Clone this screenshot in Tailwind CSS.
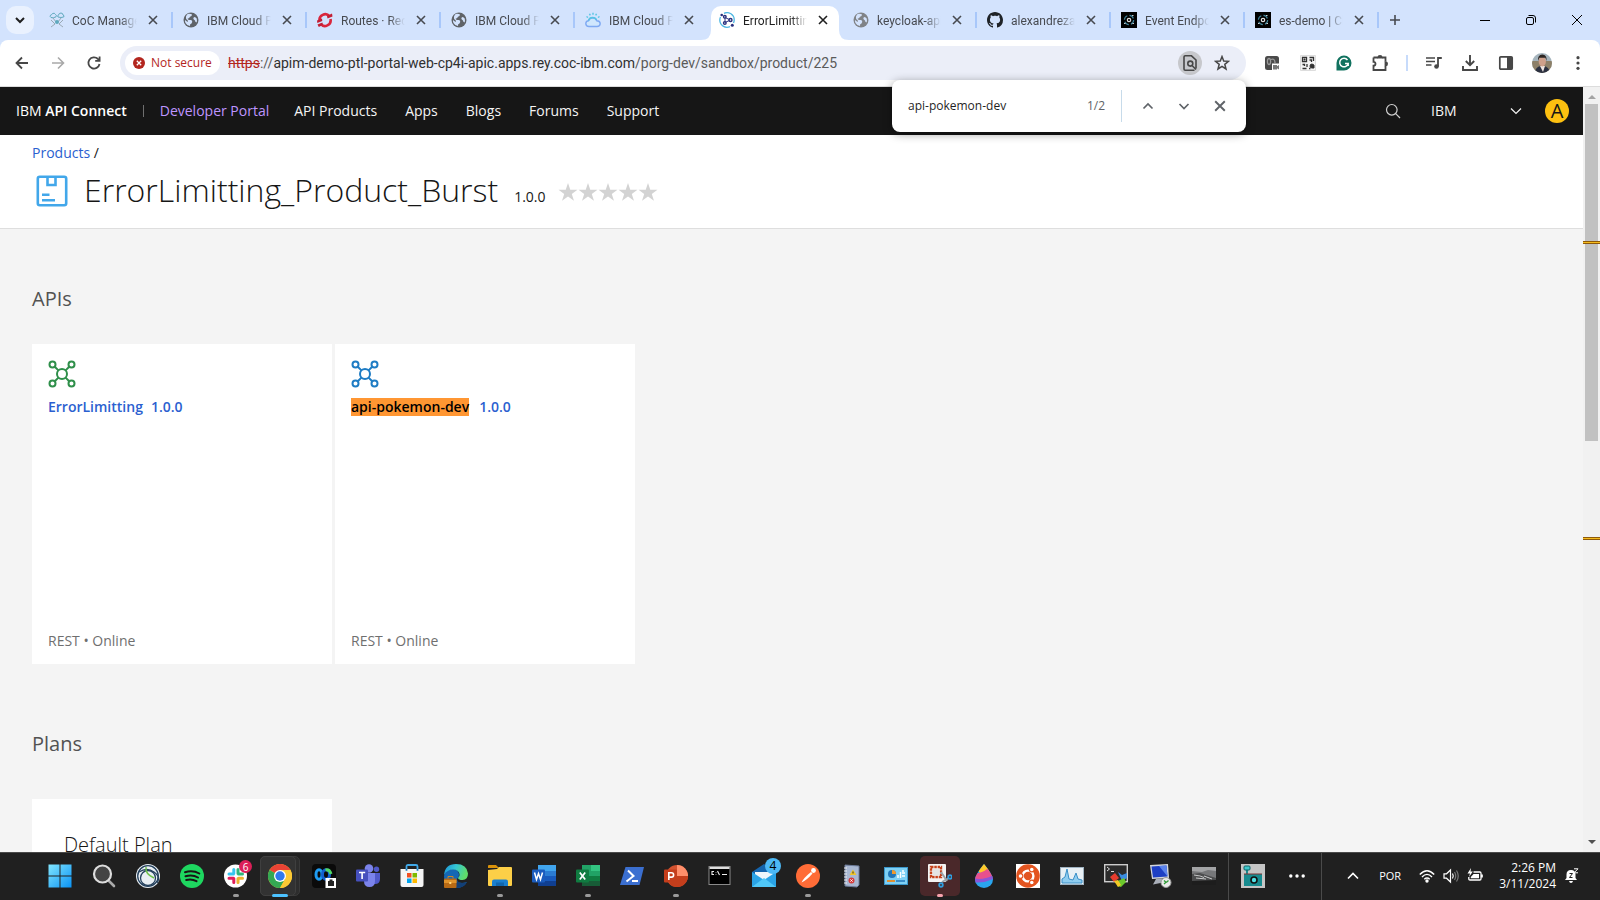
<!DOCTYPE html>
<html lang="en">
<head>
<meta charset="utf-8">
<title>ErrorLimitting_Product_Burst | IBM API Connect</title>
<script src="https://cdn.jsdelivr.net/npm/@tailwindcss/browser@4"></script>
</head>
<body class="flex h-screen flex-col overflow-hidden bg-white font-['Open_Sans','Noto_Sans',sans-serif] text-[#161616]">

<svg class="hidden" aria-hidden="true">
  <symbol id="x" viewBox="0 0 10 10"><path d="M1 1l8 8M9 1L1 9" stroke="currentColor" stroke-width="1.6" fill="none"/></symbol>
  <symbol id="globe" viewBox="0 0 16 16"><circle cx="8" cy="8" r="7.5" fill="currentColor"/><path d="M5 1.800Q8 1.500 9 2.500Q9 4.500 7 4.800Q6.500 6.500 4.600 6.800Q4.500 8 8 8Q9.500 8.300 9.200 10Q8.800 12 7.200 12.300L7 14Q4 13.700 2.500 11Q1.800 9.500 2 8Q3.500 9.500 5 9.800Q5.500 8.800 4 8Q2.500 6.500 3 4.500Q3.800 2.500 5 1.800ZM11 5Q13 5 13.700 6.500Q14.300 8.500 13.500 10.500Q12 10 12 8.500Q10.500 7.500 10.300 6.500Z" fill="#d3e3fd"/></symbol>
  <symbol id="event" viewBox="0 0 16 16"><rect width="16" height="16" fill="#000"/><circle cx="8" cy="8" r="4.600" fill="none" stroke="#3d7f95" stroke-width="1.200" stroke-dasharray="5 2.200"/><circle cx="8" cy="8" r="1.700" fill="none" stroke="#ddd" stroke-width="1.200"/><path d="M3 11.500h1.500M11.500 11.500H13M11 3.500h1.500" stroke="#ccc"/></symbol>
  <symbol id="net" viewBox="0 0 28 28"><g fill="none" stroke="currentColor" stroke-width="2"><circle cx="14" cy="14" r="5"/><circle cx="4.500" cy="4.500" r="3"/><circle cx="23.500" cy="4.500" r="3"/><circle cx="4.500" cy="23.500" r="3"/><circle cx="23.500" cy="23.500" r="3"/><path d="M6.800 6.800l3.600 3.600M21.200 6.800l-3.600 3.600M6.800 21.200l3.600-3.600M21.200 21.200l-3.600-3.600"/></g></symbol>
  <symbol id="star" viewBox="0 0 20 19"><path d="M10 0l2.400 7H20l-6 4.500 2.300 7.200L10 14.300l-6.300 4.400L6 11.500 0 7h7.600z" fill="#d3d3d3"/></symbol>
</svg>

<!-- Tab strip -->
<header class="flex h-10 shrink-0 bg-[#d3e3fd] text-[#474a50]">
  <button aria-label="Search tabs" class="ml-1.5 mt-1.5 mr-1 grid size-7 place-items-center rounded-[10px] bg-[#e9f1fe] text-[#1f1f1f]"><svg class="size-3" viewBox="0 0 12 12"><path d="M2 4l4 4 4-4" fill="none" stroke="currentColor" stroke-width="2"/></svg></button>
  <nav aria-label="Tabs" class="flex font-['Roboto','Open_Sans',sans-serif] text-xs">
    <div class="flex w-[134px] items-center pl-[11px]">
      <svg class="size-4 shrink-0" viewBox="0 0 16 16"><g fill="none" stroke="#5fa9bd"><path d="M2 5.500Q.5 4.500 1.500 3.200Q3 2.800 3.500 1.500Q5.500.5 6.500 2.500Q8 3 7 4.800Q4 6.500 2 5.500ZM9 5Q8 4 9.500 3Q10 1 12 1Q14 1.200 14 3Q15.700 3.500 14.700 5Q12 6 9 5Z"/><path d="M4 6l3 4M12 6L9 10M2 8l4 4-4 3M14 8l-4 4 4 3" stroke="#9aa9b5"/></g><circle cx="8" cy="10" r="2" fill="#5fa9bd"/></svg>
      <a href="#" class="ml-[7px] w-[65px] overflow-hidden pt-px whitespace-nowrap mask-r-from-75% mask-r-to-100%">CoC Management</a>
      <button aria-label="Close tab" class="ml-2 grid size-4 place-items-center"><svg class="size-2.5"><use href="#x"/></svg></button>
      <span class="-mr-px ml-auto h-4 w-0.5 bg-[#a8c7fa]"></span>
    </div>
    <div class="flex w-[134px] items-center pl-[11px]">
      <svg class="size-4 shrink-0 text-[#5f6368]"><use href="#globe"/></svg>
      <a href="#" class="ml-2 w-16 overflow-hidden pt-px whitespace-nowrap mask-r-from-75% mask-r-to-100%">IBM Cloud Pak</a>
      <button aria-label="Close tab" class="ml-2 grid size-4 place-items-center"><svg class="size-2.5"><use href="#x"/></svg></button>
      <span class="-mr-px ml-auto h-4 w-0.5 bg-[#a8c7fa]"></span>
    </div>
    <div class="flex w-[134px] items-center pl-[11px]">
      <svg class="size-4 shrink-0" viewBox="0 0 16 16"><path d="M2.600 9A5.700 5.700 0 0 1 12.500 4.200M13.500 7A5.700 5.700 0 0 1 3.500 11.800" fill="none" stroke="#d9263c" stroke-width="2.600"/><path d="M10 4l5-2.500.5 3-5 2zM0 8.500l5-2 .3 2.500-5 2zM.5 12.500l5-2 .3 2.500-4 2z" fill="#c21f35"/></svg>
      <a href="#" class="ml-2 w-16 overflow-hidden pt-px whitespace-nowrap mask-r-from-75% mask-r-to-100%">Routes · Red Hat</a>
      <button aria-label="Close tab" class="ml-2 grid size-4 place-items-center"><svg class="size-2.5"><use href="#x"/></svg></button>
      <span class="-mr-px ml-auto h-4 w-0.5 bg-[#a8c7fa]"></span>
    </div>
    <div class="flex w-[134px] items-center pl-[11px]">
      <svg class="size-4 shrink-0 text-[#5f6368]"><use href="#globe"/></svg>
      <a href="#" class="ml-2 w-16 overflow-hidden pt-px whitespace-nowrap mask-r-from-75% mask-r-to-100%">IBM Cloud Pak</a>
      <button aria-label="Close tab" class="ml-2 grid size-4 place-items-center"><svg class="size-2.5"><use href="#x"/></svg></button>
      <span class="-mr-px ml-auto h-4 w-0.5 bg-[#a8c7fa]"></span>
    </div>
    <div class="flex w-[134px] items-center pl-[11px]">
      <svg class="size-4 shrink-0" viewBox="0 0 16 16"><path d="M4 14.500Q.8 14.500.8 11.500Q1 9 3.500 8.800Q4.500 6 7.500 5.800Q11 6 11.800 8.800Q15.200 9 15.200 11.800Q15 14.500 12 14.500Z" fill="#cfe6fd" stroke="#7ea9f3" stroke-width="1.400"/><path d="M3.500 8.500Q4.500 5.500 7.500 5.500Q10.500 5.500 11.500 8" fill="none" stroke="#56c5e3" stroke-width="1.400"/><path d="M8 .8V2.800M4.500 1.800l.8 1.600M11.500 1.800l-.8 1.600M1.500 4.500l1.500 1M14.500 4.500l-1.500 1" stroke="#56c5e3" stroke-width="1.400"/></svg>
      <a href="#" class="ml-2 w-16 overflow-hidden pt-px whitespace-nowrap mask-r-from-75% mask-r-to-100%">IBM Cloud Pak</a>
      <button aria-label="Close tab" class="ml-2 grid size-4 place-items-center"><svg class="size-2.5"><use href="#x"/></svg></button>
    </div>
    <div class="relative w-[134px] px-[3px] pt-1.5 text-[#1f1f1f]">
      <div class="flex h-full items-center rounded-t-[10px] bg-white pb-1.5 pl-2">
        <svg class="size-4 shrink-0" viewBox="0 0 16 16"><path d="M5 1.300A7.200 7.200 0 0 1 15.200 8Q15.200 9.500 14.500 11M11 14.600A7.200 7.200 0 0 1 .8 8Q.8 6.500 1.500 5" fill="none" stroke="#4db6e2" stroke-width="1.300"/><path d="M6 5.200v5.600M6.200 5.500l5 2.500M6.200 10.500l5-2.500" fill="none" stroke="#29307e" stroke-width="1"/><g fill="#fff" stroke="#29307e" stroke-width="1.400"><circle cx="5.800" cy="4.800" r="1.300"/><circle cx="5.800" cy="11" r="1.300"/><circle cx="11.500" cy="8" r="1.500"/></g><g fill="#29307e"><circle cx="2.700" cy="3" r="1.300"/><circle cx="13.300" cy="13.300" r="1.500"/></g></svg>
        <a href="#" aria-current="page" class="ml-2 w-16 overflow-hidden pt-px whitespace-nowrap mask-r-from-75% mask-r-to-100%">ErrorLimitting_Product</a>
        <button aria-label="Close tab" class="ml-2 grid size-4 place-items-center"><svg class="size-2.5"><use href="#x"/></svg></button>
      </div>
      <svg class="absolute bottom-0 -left-[7px] size-2.5" viewBox="0 0 10 10"><path d="M10 0v10H0Q10 10 10 0z" fill="#fff"/></svg>
      <svg class="absolute bottom-0 -right-[7px] size-2.5" viewBox="0 0 10 10"><path d="M0 0v10h10Q0 10 0 0z" fill="#fff"/></svg>
    </div>
    <div class="flex w-[134px] items-center pl-[11px]">
      <svg class="size-4 shrink-0 text-[#808387]"><use href="#globe"/></svg>
      <a href="#" class="ml-2 w-16 overflow-hidden pt-px whitespace-nowrap mask-r-from-75% mask-r-to-100%">keycloak-apic</a>
      <button aria-label="Close tab" class="ml-2 grid size-4 place-items-center"><svg class="size-2.5"><use href="#x"/></svg></button>
      <span class="-mr-px ml-auto h-4 w-0.5 bg-[#a8c7fa]"></span>
    </div>
    <div class="flex w-[134px] items-center pl-[11px]">
      <svg class="size-4 shrink-0 text-[#1f2328]" viewBox="0 0 16 16"><path fill="currentColor" d="M8 0C3.580 0 0 3.580 0 8c0 3.540 2.290 6.530 5.470 7.590.4.070.55-.17.55-.38 0-.19-.01-.82-.01-1.490-2.010.37-2.530-.49-2.690-.94-.09-.23-.48-.94-.82-1.130-.28-.15-.68-.52-.01-.53.63-.01 1.080.58 1.230.82.72 1.210 1.870.87 2.330.66.070-.52.28-.87.51-1.070-1.780-.2-3.640-.89-3.640-3.950 0-.87.31-1.590.82-2.150-.08-.2-.36-1.020.08-2.120 0 0 .67-.21 2.200.82.64-.18 1.320-.27 2-.27s1.360.09 2 .27c1.530-1.040 2.200-.82 2.200-.82.44 1.100.16 1.920.08 2.120.51.560.82 1.270.82 2.150 0 3.070-1.870 3.750-3.650 3.950.29.250.54.730.54 1.480 0 1.070-.01 1.930-.01 2.200 0 .21.15.46.55.38A8.010 8.010 0 0 0 16 8c0-4.420-3.580-8-8-8z"/></svg>
      <a href="#" class="ml-2 w-16 overflow-hidden pt-px whitespace-nowrap mask-r-from-75% mask-r-to-100%">alexandrezanetti</a>
      <button aria-label="Close tab" class="ml-2 grid size-4 place-items-center"><svg class="size-2.5"><use href="#x"/></svg></button>
      <span class="-mr-px ml-auto h-4 w-0.5 bg-[#a8c7fa]"></span>
    </div>
    <div class="flex w-[134px] items-center pl-[11px]">
      <svg class="size-4 shrink-0"><use href="#event"/></svg>
      <a href="#" class="ml-2 w-16 overflow-hidden pt-px whitespace-nowrap mask-r-from-75% mask-r-to-100%">Event Endpoint</a>
      <button aria-label="Close tab" class="ml-2 grid size-4 place-items-center"><svg class="size-2.5"><use href="#x"/></svg></button>
      <span class="-mr-px ml-auto h-4 w-0.5 bg-[#a8c7fa]"></span>
    </div>
    <div class="flex w-[134px] items-center pl-[11px]">
      <svg class="size-4 shrink-0"><use href="#event"/></svg>
      <a href="#" class="ml-2 w-16 overflow-hidden pt-px whitespace-nowrap mask-r-from-75% mask-r-to-100%">es-demo | Cloud</a>
      <button aria-label="Close tab" class="ml-2 grid size-4 place-items-center"><svg class="size-2.5"><use href="#x"/></svg></button>
      <span class="-mr-px ml-auto h-4 w-0.5 bg-[#a8c7fa]"></span>
    </div>
  </nav>
  <button aria-label="New tab" class="grid w-[34px] place-items-center"><svg class="size-3" viewBox="0 0 12 12"><path d="M6 1v10M1 6h10" stroke="currentColor" stroke-width="1.600"/></svg></button>
  <div class="ml-auto flex text-black">
    <button aria-label="Minimize" class="grid w-[46px] place-items-center"><svg class="size-3" viewBox="0 0 12 12"><path d="M1 6.500h10" stroke="currentColor"/></svg></button>
    <button aria-label="Restore" class="grid w-[46px] place-items-center"><svg class="size-3" viewBox="0 0 12 12" fill="none" stroke="currentColor"><rect x="1.500" y="3.500" width="7" height="7" rx="1.500"/><path d="M3.500 1.500H8Q10.500 1.500 10.500 4V8.500"/></svg></button>
    <button aria-label="Close" class="grid w-[46px] place-items-center"><svg class="size-3" viewBox="0 0 12 12"><path d="M1 1l10 10M11 1L1 11" stroke="currentColor"/></svg></button>
  </div>
</header>

<!-- Toolbar -->
<div class="bg-[#d3e3fd]">
<div class="relative flex h-[47px] shrink-0 items-center rounded-t-lg border-b border-[#dcdcdc] bg-white px-1 text-[#474747]">
  <button aria-label="Back" class="grid size-9 place-items-center"><svg class="size-4" viewBox="0 0 16 16" fill="none" stroke="currentColor" stroke-width="1.800"><path d="M14 8H3M8 2.500L2.500 8 8 13.500"/></svg></button>
  <button aria-label="Forward" class="grid size-9 place-items-center text-[#a9a9a9]"><svg class="size-4" viewBox="0 0 16 16" fill="none" stroke="currentColor" stroke-width="1.600"><path d="M2 8h11M8 2.500L13.500 8 8 13.500"/></svg></button>
  <button aria-label="Reload" class="grid size-9 place-items-center"><svg class="size-4" viewBox="0 0 16 16" fill="none" stroke="currentColor" stroke-width="1.800"><path d="M13.500 9A5.600 5.600 0 1 1 12 4l1.500 1.700"/><path d="M13.600 1.500v4.400H9.200"/></svg></button>
  <div class="ml-2 flex h-[34px] flex-1 items-center rounded-full bg-[#ebeef8] pl-[5px] pr-2">
    <button class="flex h-6 w-[95px] items-center gap-1.5 rounded-full bg-white pl-2 text-xs whitespace-nowrap text-[#b3261e]"><svg class="size-3" viewBox="0 0 12 12"><circle cx="6" cy="6" r="6" fill="#b3261e"/><path d="M3.800 3.800l4.400 4.400M8.200 3.800L3.800 8.200" stroke="#fff" stroke-width="1.300"/></svg>Not secure</button>
    <div class="ml-2 flex-1 font-['Roboto','Open_Sans',sans-serif] text-sm whitespace-nowrap text-[#5a5a5a]"><span class="text-[#b3261e] line-through">https</span>://<span class="text-[#303030]">apim-demo-ptl-portal-web-cp4i-apic.apps.rey.coc-ibm.com</span>/porg-dev/sandbox/product/225</div>
    <button aria-label="Find in page" class="grid size-6 place-items-center rounded-full bg-[#c7c8cc]"><svg class="size-4" viewBox="0 0 16 16" fill="none" stroke="currentColor" stroke-width="1.600"><path d="M12.500 15.200H3.200Q2 15.200 2 14V2Q2 .8 3.200.8h6.300L14 5v8.500"/><circle cx="8.300" cy="8.600" r="2.500"/><path d="M10 10.500l4 4"/></svg></button>
    <button aria-label="Bookmark this page" class="ml-1 grid size-8 place-items-center"><svg class="size-4" viewBox="0 0 16 16"><path d="M8 1.600l1.700 4.400 4.800.3-3.700 3 1.200 4.700-4-2.600L4 14l1.200-4.700-3.700-3L6.300 6z" fill="none" stroke="currentColor" stroke-width="1.500"/></svg></button>
  </div>
  <div class="ml-2 flex items-center">
    <button aria-label="Recorder extension" class="grid size-9 place-items-center"><svg class="size-4" viewBox="0 0 16 16"><rect x="1" y="1" width="14" height="14" rx="2.500" fill="#4a4a4a"/><ellipse cx="5" cy="6.500" rx="1.600" ry="3" fill="none" stroke="#9a9a9a" stroke-width="1.300"/><path d="M7 4.500q4-1.500 4 3.500" fill="none" stroke="#9a9a9a" stroke-width="1.300"/><path d="M8 8.500h8V16H8z" fill="#fff"/><path d="M9 10h4v1.200l2-1.200v4.500l-2-1.200v1.200H9z" fill="#777"/></svg></button>
    <button aria-label="QR code" class="grid size-9 place-items-center"><svg class="size-4" viewBox="0 0 16 16"><path fill="#f5f5f5" stroke="#ddd" d="M.5.500h15v15H.5z"/><path d="M2.500 2.500h4v4h-4zM9.500 2.500h4v3.500M9.500 5h2v2M2.500 9.500h2v1.500M7 9v3M2.500 13.500h4M9 13.500h1.500" fill="none" stroke="#333" stroke-width="1.300"/><path d="M4 4h1v1H4zM10 11q0-2 2-2l2 1v3h-2q-2 0-2-2z" fill="#333" stroke="#333"/></svg></button>
    <button aria-label="Grammarly" class="grid size-9 place-items-center"><svg class="size-4" viewBox="0 0 16 16"><path d="M8 .5A7.500 7.500 0 1 1 8 15.500H.5V8A7.500 7.500 0 0 1 8 .5z" fill="#11725f"/><path d="M11.500 5A4.300 4.300 0 1 0 12.200 8.500H9M12.200 8.200V11" fill="none" stroke="#fff" stroke-width="1.500"/></svg></button>
    <button aria-label="Extensions" class="grid size-9 place-items-center"><svg class="size-[18px]" viewBox="0 0 18 18"><path d="M2.500 3.500h4.500M11 3.500h3.500v4M14.500 12v4h-12v-4.300q2 0 2-1.900t-2-1.900V3.500" fill="none" stroke="currentColor" stroke-width="1.800"/><path d="M6.500 4.400V3.200a2.500 2.200 0 0 1 5 0v1.200zM13.600 7.200h1.200a2.200 2.500 0 0 1 0 5h-1.200z" fill="currentColor"/></svg></button>
    <span class="mx-2 h-4 w-0.5 bg-[#c7dbfb]"></span>
    <button aria-label="Media controls" class="grid size-9 place-items-center"><svg class="size-4" viewBox="0 0 16 16"><path d="M0 3h9M0 6.500h9M0 10h5.500" stroke="currentColor" stroke-width="1.600"/><path d="M12 11.500V3h3.800" fill="none" stroke="currentColor" stroke-width="1.800"/><circle cx="10.500" cy="11.500" r="2.300" fill="currentColor"/></svg></button>
    <button aria-label="Downloads" class="grid size-9 place-items-center"><svg class="size-4" viewBox="0 0 16 16" fill="none" stroke="currentColor" stroke-width="1.900"><path d="M8 0v10M3.800 6L8 10.200 12.200 6M1 11v4h14v-4"/></svg></button>
    <button aria-label="Side panel" class="grid size-9 place-items-center"><svg class="size-4" viewBox="0 0 16 16"><rect x="1.800" y="1.800" width="12.400" height="12.400" rx="1" fill="none" stroke="currentColor" stroke-width="1.700"/><path d="M9 2h5v12H9z" fill="currentColor"/></svg></button>
    <button aria-label="Profile" class="grid size-9 place-items-center"><svg class="size-5 rounded-full" viewBox="0 0 20 20"><path fill="#a5b4bd" d="M0 0h20v20H0z"/><path fill="#8d8068" d="M0 8h20v12H0z"/><path d="M2.500 20q1-6 6-7h3q6 1 6.500 7z" fill="#2b3040"/><path d="M8 13h5l-2 6z" fill="#efe5df"/><ellipse cx="10.300" cy="8.500" rx="3.600" ry="5" fill="#cfa08a"/><path d="M6 8q-.5-6.500 4.300-6.500t4.300 6.500l-1.200-3.200h-6z" fill="#2d2522"/></svg></button>
    <button aria-label="Menu" class="grid size-9 place-items-center"><svg class="size-4" viewBox="0 0 16 16" fill="currentColor"><circle cx="8" cy="2.700" r="1.600"/><circle cx="8" cy="8" r="1.600"/><circle cx="8" cy="13.300" r="1.600"/></svg></button>
  </div>

  <!-- Find bar -->
  <div role="search" class="absolute top-10 right-[354px] z-10 flex h-[52px] w-[354px] items-center rounded-lg bg-white pr-2 pl-4 text-xs text-[#1f1f1f] shadow-[0_2px_10px_rgba(0,0,0,.4)]">
    <input aria-label="Find in page" value="api-pokemon-dev" class="min-w-0 flex-1 outline-none">
    <span class="text-[#5f6368]">1/2</span>
    <span class="ml-4 mr-2 h-8 w-px bg-[#c7dbea]"></span>
    <button aria-label="Previous match" class="grid size-9 place-items-center text-[#5f6368]"><svg class="size-3" viewBox="0 0 12 12"><path d="M1.500 8.500L6 4l4.500 4.500" fill="none" stroke="currentColor" stroke-width="1.700"/></svg></button>
    <button aria-label="Next match" class="grid size-9 place-items-center text-[#5f6368]"><svg class="size-3" viewBox="0 0 12 12"><path d="M1.500 4L6 8.500 10.500 4" fill="none" stroke="currentColor" stroke-width="1.700"/></svg></button>
    <button aria-label="Close find bar" class="grid size-9 place-items-center text-[#5f6368]"><svg class="size-3"><use href="#x"/></svg></button>
  </div>
</div>
</div>

<!-- Page -->
<div class="flex min-h-0 flex-1">
  <div class="min-w-0 flex-1 overflow-hidden bg-[#f4f4f4]">
    <nav aria-label="Portal" class="flex h-12 items-center bg-[#161616] pr-3.5 pl-4 text-sm text-[#f4f4f4]">
      <a href="#" class="text-white">IBM <span class="font-semibold">API Connect</span></a>
      <span class="mx-4 h-3 w-px bg-[#6f6f6f]"></span>
      <a href="#" class="text-[#be95ff]">Developer Portal</a>
      <div class="ml-[25px] flex gap-7"><a href="#">API Products</a><a href="#">Apps</a><a href="#">Blogs</a><a href="#">Forums</a><a href="#">Support</a></div>
      <button aria-label="Search" class="ml-auto"><svg class="size-4" viewBox="0 0 16 16" fill="none" stroke="#d0d0d0" stroke-width="1.200"><circle cx="6.800" cy="6.800" r="5.300"/><path d="M10.700 10.700L15 15"/></svg></button>
      <button class="ml-[30px] flex w-[91px] items-center justify-between">IBM<svg class="size-3" viewBox="0 0 12 12"><path d="M1 3.500l5 5 5-5" fill="none" stroke="currentColor" stroke-width="1.200"/></svg></button>
      <button aria-label="Account" class="ml-[23px] grid size-6 place-items-center rounded-full bg-[#fdc010] text-xl leading-6 text-[#161616]">A</button>
    </nav>
    <div class="h-[94px] border-b border-[#dedede] bg-white px-8 pt-2">
      <div class="text-sm leading-5"><a href="#" class="text-[#2b5fd0]">Products</a> /</div>
      <div class="mt-2.5 flex h-9 items-center">
        <svg class="ml-1 size-8" viewBox="0 0 32 32" fill="none" stroke="#42a7ea" stroke-width="2.600"><rect x="1.800" y="1.800" width="28.400" height="28.400" rx="2"/><path d="M11.500 2v8h8V2M6 19.800h7.500M6 25.200h13"/></svg>
        <h1 class="ml-4 pb-0.5 text-[32px] font-light leading-9">ErrorLimitting_Product_Burst</h1>
        <span class="ml-4 self-end text-sm leading-6">1.0.0</span>
        <div role="img" aria-label="No rating" class="ml-3 flex pt-0.5"><svg class="h-[18px] w-5"><use href="#star"/></svg><svg class="h-[18px] w-5"><use href="#star"/></svg><svg class="h-[18px] w-5"><use href="#star"/></svg><svg class="h-[18px] w-5"><use href="#star"/></svg><svg class="h-[18px] w-5"><use href="#star"/></svg></div>
      </div>
    </div>
    <main class="px-8 pt-14">
      <h2 class="text-xl leading-7 text-[#525252]">APIs</h2>
      <div class="mt-[31px] flex gap-[3px]">
        <article class="flex h-80 w-[300px] flex-col bg-white p-4">
          <svg class="size-7 text-[#2f8f4a]"><use href="#net"/></svg>
          <h3 class="mt-2.5 flex gap-2 text-sm font-semibold leading-[18px]"><a href="#" class="text-[#2b5fd0]">ErrorLimitting</a><a href="#" class="text-[#2b5fd0]">1.0.0</a></h3>
          <p class="mt-auto text-sm leading-[14px] text-[#6f6f6f]">REST • Online</p>
        </article>
        <article class="flex h-80 w-[300px] flex-col bg-white p-4">
          <svg class="size-7 text-[#1e7cc4]"><use href="#net"/></svg>
          <h3 class="mt-2.5 flex gap-2.5 text-sm font-semibold leading-[18px]"><a href="#" class="bg-[#ff9632] text-black">api-pokemon-dev</a><a href="#" class="text-[#2b5fd0]">1.0.0</a></h3>
          <p class="mt-auto text-sm leading-[14px] text-[#6f6f6f]">REST • Online</p>
        </article>
      </div>
      <h2 class="mt-[66px] text-xl leading-7 text-[#525252]">Plans</h2>
      <section class="mt-[41px] w-[300px] bg-white p-8"><h3 class="text-xl font-light leading-7">Default Plan</h3></section>
    </main>
  </div>
  <div class="relative flex w-[17px] flex-col items-center justify-between bg-[#f1f1f1] py-1.5" aria-hidden="true">
    <svg class="size-2" viewBox="0 0 8 8"><path d="M0 6l4-4 4 4z" fill="#a3a3a3"/></svg>
    <svg class="size-2" viewBox="0 0 8 8"><path d="M0 2l4 4 4-4z" fill="#505050"/></svg>
    <span class="absolute inset-x-0.5 top-[17px] h-[44%] bg-[#c1c1c1]"></span>
    <span class="absolute inset-x-0 top-[154px] h-[3px] border-y border-[#8f5a08] bg-[#f5bc1e]"></span>
    <span class="absolute inset-x-0 top-[450px] h-[3px] border-y border-[#8f5a08] bg-[#f5bc1e]"></span>
  </div>
</div>

<!-- Taskbar -->
<footer class="flex h-12 shrink-0 items-stretch border-t border-[#4a4a4a] bg-[#202020] pb-px pl-[38px] text-xs text-white">
  <button aria-label="Start" class="grid w-11 place-items-center"><svg class="size-6" viewBox="0 0 24 24"><defs><linearGradient id="win" x2="1" y2="1"><stop stop-color="#82e6ff"/><stop offset="1" stop-color="#0a93f5"/></linearGradient></defs><path d="M.5.5h11v11H.5zM12.500.5h11v11h-11zM.5 12.500h11v11H.5zM12.500 12.500h11v11h-11z" fill="url(#win)"/></svg></button>
  <button aria-label="Search" class="grid w-11 place-items-center"><svg class="size-6" viewBox="0 0 24 24"><path d="M16 16l6 6" stroke="#aaa" stroke-width="2.600" stroke-linecap="round"/><circle cx="10.500" cy="10" r="8.500" fill="#444" stroke="#ddd" stroke-width="2.200"/></svg></button>
  <button aria-label="Cisco Secure Client" class="grid w-11 place-items-center"><svg class="size-6" viewBox="0 0 24 24"><circle cx="12" cy="12" r="12" fill="#e8eef3"/><g fill="none" stroke="#24405c" stroke-width="1.300"><circle cx="12" cy="12" r="10.300"/><circle cx="12" cy="14" r="7.500"/><path d="M3 8q8-5 15 0t3 11"/></g><path d="M10 3q-1 7 8 11" fill="none" stroke="#6cc04a" stroke-width="1.400"/></svg></button>
  <button aria-label="Spotify" class="grid w-11 place-items-center"><svg class="size-6" viewBox="0 0 24 24"><circle cx="12" cy="12" r="12" fill="#1ed760"/><path d="M5 8.200q8-2.200 14.300 1.300M5.500 12.300q7-2 12.500 1.200M6.200 16q5.500-1.500 10.300 1.200" fill="none" stroke="#191414" stroke-width="2" stroke-linecap="round"/></svg></button>
  <button aria-label="Slack" class="relative grid w-11 place-items-center"><svg class="size-6" viewBox="0 0 24 24"><circle cx="11.500" cy="12" r="11.500" fill="#fff"/><g stroke-width="3" stroke-linecap="round"><path d="M9.800 5.500v4M5 10h4.500" stroke="#36c5f0"/><path d="M14 5.500v4M14.500 10h4" stroke="#2eb67d"/><path d="M14 14.500v4M14.500 14.200h4" stroke="#ecb22e"/><path d="M9.800 14.500v4M5 14.200h4.500" stroke="#e01e5a"/></g></svg><span class="absolute top-[7px] right-1.5 grid size-[13px] place-items-center rounded-full bg-[#dc1f58] text-[10px] leading-none">6</span><span class="absolute bottom-0.5 h-[3px] w-1.5 rounded-full bg-[#9a9a9a]"></span></button>
  <button aria-label="Google Chrome" class="relative grid w-11 place-items-center"><span class="absolute inset-y-[3px] left-0.5 w-10 rounded-[5px] border border-[#3a3a3a] bg-[#2d2d2d]"></span><span class="absolute inset-y-[3px] left-0.5 w-9 rounded-[5px] border border-[#3f3f3f] bg-[#323232]"></span><svg class="relative size-6" viewBox="0 0 24 24"><circle cx="12" cy="12" r="12" fill="#fcc934"/><path d="M12 12L1.600 6A12 12 0 0 1 22.400 6z" fill="#ea4335"/><path d="M1.600 6A12 12 0 0 0 12 24l5.200-9L12 12z" fill="#34a853"/><path d="M12 6h10.400A12 12 0 0 1 12 24l5-9z" fill="#fcc934"/><circle cx="12" cy="12" r="6" fill="#fff"/><circle cx="12" cy="12" r="4.700" fill="#3079ed"/></svg><span class="absolute bottom-0.5 h-[3px] w-4 rounded-full bg-[#4cc2ff]"></span></button>
  <button aria-label="Webex" class="grid w-11 place-items-center"><svg class="size-6" viewBox="0 0 24 24"><rect width="24" height="24" rx="4" fill="#0a0a0a"/><g fill="none" stroke-width="3"><ellipse cx="7" cy="10.500" rx="3" ry="4.800" stroke="#1f9bf0"/><ellipse cx="14" cy="10.500" rx="3.500" ry="4.800" stroke="#1260d0"/><path d="M13.500 6q4-1 5.500 4" stroke="#4fd866"/></g><rect x="13.500" y="14" width="10.500" height="10" fill="#fff"/><path d="M16 17h6v5h-6zM17.500 15.500h3V17h-3z" fill="#222"/></svg></button>
  <button aria-label="Microsoft Teams" class="grid w-11 place-items-center"><svg class="size-6" viewBox="0 0 24 24"><circle cx="13" cy="4.500" r="4.300" fill="#7b83eb"/><circle cx="20.500" cy="5.200" r="2.700" fill="#5059c9"/><path d="M15 9h9v6q0 5-5 5h-4z" fill="#5059c9"/><path d="M8 9h11v8q0 6-5.500 6T8 17z" fill="#7b83eb"/><rect y="5.500" width="12" height="12" rx="1" fill="#4650bd"/><path d="M3 8.500h6.200M6.100 8.500v6.500" stroke="#fff" stroke-width="1.600"/></svg></button>
  <button aria-label="Microsoft Store" class="grid w-11 place-items-center"><svg class="size-6" viewBox="0 0 24 24"><path d="M6.500 6V2.500Q6.500 1 8 1h8Q17.500 1 17.500 2.500V6" fill="none" stroke="#41a9e8" stroke-width="1.800"/><path d="M.5 5h23v16q0 2-2 2h-19q-2 0-2-2z" fill="#f5f5f5"/><path d="M7 9h4.500v4.500H7z" fill="#f25022"/><path d="M12.500 9H17v4.500h-4.500z" fill="#7fba00"/><path d="M7 14.500h4.500V19H7z" fill="#00a4ef"/><path d="M12.500 14.500H17V19h-4.500z" fill="#ffb900"/><path d="M6.500 5v1.800M17.500 5v1.800" stroke="#1c78b8" stroke-width="1.800"/></svg></button>
  <button aria-label="Microsoft Edge" class="grid w-11 place-items-center"><svg class="size-6" viewBox="0 0 24 24"><defs><linearGradient id="edge" x2="1" y2="0.300"><stop stop-color="#1b8fd8"/><stop offset=".5" stop-color="#34c6d4"/><stop offset="1" stop-color="#5fdc6a"/></linearGradient></defs><path d="M0 12Q1 5 8 5q6 0 7 5 .5 3-2 5 0 6 10 3-4 6-11 6Q0 24 0 12z" fill="#1567b4"/><path d="M0 11Q1 0 12 0q11 0 12 9.500Q24 15.500 18.500 16q-4 0-4.500-2 2-1.500 1.500-4Q14.500 5.500 9 5.500 3 5.500 0 11z" fill="url(#edge)"/><path d="M12 16q4 4.500 11 2-2.500 6-11 6z" fill="#123f76"/><rect y="14.500" width="12.500" height="9.500" rx="1" fill="#b86a15"/><path d="M0 16h12.500v3H0z" fill="#e0932b"/><path d="M5.300 18h2v2h-2z" fill="#ffd77a"/><path d="M4 14.500v-2h5v2" fill="none" stroke="#d28620"/></svg></button>
  <button aria-label="File Explorer" class="relative grid w-11 place-items-center"><svg class="size-6" viewBox="0 0 24 24"><path d="M0 2q0-1 1-1h7l3 3h-11z" fill="#d9920a"/><path d="M0 6l9-1 2-2h12q1 0 1 1v17q0 1-1 1H1q-1 0-1-1z" fill="#fdcf47"/><path d="M4 22v-4.500q0-2 2-2h12q2 0 2 2V22z" fill="#1a7fce"/><path d="M8 18.500h8V22H8z" fill="#1166ad"/></svg><span class="absolute bottom-0.5 h-[3px] w-1.5 rounded-full bg-[#9a9a9a]"></span></button>
  <button aria-label="Word" class="grid w-11 place-items-center"><svg class="size-6" viewBox="0 0 24 24"><path d="M6 1h18v6H6z" fill="#41a5ee"/><path d="M6 7h18v5H6z" fill="#2b7cd3"/><path d="M6 12h18v5H6z" fill="#185abd"/><path d="M6 17h18v5H6z" fill="#103f91"/><rect y="5.500" width="13" height="13" rx="1" fill="#1b5cbe"/><path d="M2.500 8.500l2 7 2-6 2 6 2-7" fill="none" stroke="#fff" stroke-width="1.500"/></svg></button>
  <button aria-label="Excel" class="relative grid w-11 place-items-center"><svg class="size-6" viewBox="0 0 24 24"><path d="M6 1h9v21H6z" fill="#21a366"/><path d="M15 1h9v6h-9z" fill="#33c481"/><path d="M15 7h9v5h-9z" fill="#21a366"/><path d="M6 12h18v5H6z" fill="#107c41"/><path d="M6 17h18v5H6z" fill="#185c37"/><rect y="5.500" width="13" height="13" rx="1" fill="#107c41"/><path d="M3.800 8.500l5.400 7M9.200 8.500l-5.400 7" stroke="#fff" stroke-width="1.700"/></svg><span class="absolute bottom-0.5 h-[3px] w-1.5 rounded-full bg-[#9a9a9a]"></span></button>
  <button aria-label="PowerShell" class="grid w-11 place-items-center"><svg class="size-6" viewBox="0 0 24 24"><path d="M5.500 3H24l-4.500 18H0z" fill="#3b6fd0"/><path d="M8 6.500l5.500 5.500-7 5.500M12 17h6" fill="none" stroke="#fff" stroke-width="2"/></svg></button>
  <button aria-label="PowerPoint" class="relative grid w-11 place-items-center"><svg class="size-6" viewBox="0 0 24 24"><circle cx="13" cy="12" r="11" fill="#d35230"/><path d="M13 1a11 11 0 0 1 11 11H13z" fill="#ff8f6b"/><path d="M5 19.500A11 11 0 0 0 24 12H13z" fill="#c43e1c"/><rect y="5.500" width="13" height="13" rx="1" fill="#c43e1c"/><path d="M4.800 16V8.700h2.600q2.200 0 2.200 2.200t-2.200 2.200H4.800" fill="none" stroke="#fff" stroke-width="1.600"/></svg><span class="absolute bottom-0.5 h-[3px] w-1.5 rounded-full bg-[#9a9a9a]"></span></button>
  <button aria-label="Command Prompt" class="grid w-11 place-items-center"><svg class="size-6" viewBox="0 0 24 24"><rect x="1" y="2.500" width="21" height="18" fill="#000" stroke="#8a8a8a"/><path d="M1.500 3h20v2h-20z" fill="#ddd"/><path d="M6 7.500H4v3h2M8 8v.5M8 10v.5M9.500 7l2 4M14 10.500h5" fill="none" stroke="#eee" stroke-width="1.100"/></svg></button>
  <button aria-label="Mail" class="relative grid w-11 place-items-center"><svg class="size-6" viewBox="0 0 24 24"><path d="M0 8L12 0l12 8v6H0z" fill="#1464ad"/><path d="M3 8h18v8H3z" fill="#eef6fb"/><path d="M0 8l12 8L24 8v15H0z" fill="#2aa3e6"/><path d="M0 23L12 14l12 9z" fill="#50c8f8"/></svg><span class="absolute top-[5px] right-[5px] grid size-4 place-items-center rounded-full bg-[#4cb8f5] text-xs leading-none text-black">4</span></button>
  <button aria-label="Postman" class="relative grid w-11 place-items-center"><svg class="size-6" viewBox="0 0 24 24"><circle cx="12" cy="12" r="12" fill="#ff6c37"/><path d="M5.500 18.500q2-4.500 9.500-10.500l1.500 1.500Q11 16 5.500 18.500z" fill="#fff"/><circle cx="17.500" cy="6.500" r="2.400" fill="#fff"/></svg><span class="absolute bottom-0.5 h-[3px] w-1.5 rounded-full bg-[#9a9a9a]"></span></button>
  <button aria-label="Event Viewer" class="grid w-11 place-items-center"><svg class="size-6" viewBox="0 0 24 24"><path d="M5 1l14 1v19l-2 2-12-1z" fill="#a9b8d2" stroke="#6c7b99"/><path d="M7 3h9v17H7z" fill="#a9b8d2"/><path d="M4 4h3M4 7h3M4 10h3M4 13h3M4 16h3M4 19h3" stroke="#eee"/><path d="M13 5.500l3.500 5.500h-7z" fill="#f0c52a"/><path d="M13 7.500v2" stroke="#333"/><circle cx="11.500" cy="16.500" r="3" fill="#d63c3c"/><path d="M10.400 15.400l2.200 2.200M12.600 15.400l-2.200 2.200" stroke="#fff"/></svg></button>
  <button aria-label="Control Panel" class="grid w-11 place-items-center"><svg class="size-6" viewBox="0 0 24 24"><rect x=".5" y="3.500" width="23" height="17" fill="#7ed0f4" stroke="#3a98cc"/><circle cx="8" cy="10" r="4" fill="#2276b8"/><path d="M8 10V6a4 4 0 0 1 4 4z" fill="#f29a2e"/><path d="M14 11v3M16.500 8v6M19 6v2M18 9h3M18 12h3" stroke="#fff" stroke-width="1.500"/><path d="M3 17h8" stroke="#e8891d" stroke-width="1.800"/><path d="M12 17h9" stroke="#2276b8" stroke-width="1.500"/></svg></button>
  <button aria-label="Snipping Tool" class="relative grid w-11 place-items-center"><span class="absolute inset-y-[3px] left-0.5 w-10 rounded-[5px] bg-[#4a282a]"></span><svg class="relative size-6" viewBox="0 0 24 24"><rect width="18" height="18" rx="1" fill="#f3f3f3"/><path d="M3 3h10v10H3z" fill="none" stroke="#c6421c" stroke-width="2.400" stroke-dasharray="2.500 .8"/><path d="M5 5h6.500v6.500H5z" fill="#e4e4e4"/><path d="M13 8l6 9M14 18l7-4" stroke="#9aa2a8" stroke-width="2"/><g fill="none" stroke="#2f9fe0" stroke-width="1.800"><circle cx="22" cy="13" r="1.800"/><circle cx="13" cy="21" r="1.800"/></g></svg><span class="absolute bottom-0.5 h-[3px] w-1.5 rounded-full bg-[#f7a3ad]"></span></button>
  <button aria-label="Paint 3D" class="grid w-11 place-items-center"><svg class="size-6" viewBox="0 0 24 24"><defs><clipPath id="drop"><path d="M12 0q9 11 9 15.500a9 8.500 0 0 1-18 0Q3 11 12 0z"/></clipPath></defs><g clip-path="url(#drop)"><path fill="#2aa5ee" d="M0 0h24v24H0z"/><path fill="#ffc928" d="M0 0h24v6L8 9z"/><path fill="#e8508d" d="M0 9q10 1 15-4l8 4v3q-8 5-23 3z"/><path fill="#8b55d8" d="M0 14q12 3 23-4v4Q12 20 0 18z"/></g></svg></button>
  <button aria-label="Ubuntu" class="grid w-11 place-items-center"><svg class="size-6" viewBox="0 0 24 24"><path fill="#fff" d="M0 0h24v24H0z"/><circle cx="12" cy="12" r="11.800" fill="#e3541f"/><circle cx="12" cy="12" r="5.400" fill="none" stroke="#fff" stroke-width="2.400"/><g fill="#fff" stroke="#e3541f" stroke-width="1.200"><circle cx="4.500" cy="12" r="2.400"/><circle cx="15.800" cy="5.500" r="2.400"/><circle cx="15.800" cy="18.500" r="2.400"/></g></svg></button>
  <button aria-label="Performance Monitor" class="grid w-11 place-items-center"><svg class="size-6" viewBox="0 0 24 24"><rect x=".5" y="3.500" width="23" height="17" fill="#e8f0f5" stroke="#9fb3c2"/><path d="M2 19v-4l3-2 2-8 2 10 4 1 3-7 2 6 4 1v3z" fill="#8fcdf0" stroke="#3a8fc7"/></svg></button>
  <button aria-label="SuperPuTTY" class="grid w-11 place-items-center"><svg class="size-6" viewBox="0 0 24 24"><rect x=".7" y=".7" width="22.600" height="17" fill="#2b2b2b" stroke="#ccc" stroke-width="1.400"/><path d="M3 3l2.500 2L3 7M7 7.500h3" fill="none" stroke="#ddd"/><path d="M6 13l5-4 4 5-5 4z" fill="#e53c2e"/><path d="M14 8l4 3 5-2v5l-5 3z" fill="#3b8de0"/><path d="M14 17l6-3 2 4-5 5-4-1z" fill="#6cc92c"/><path d="M10 17l4-1 3 5-3 2z" fill="#f3c824"/></svg></button>
  <button aria-label="Remote Desktop" class="grid w-11 place-items-center"><svg class="size-6" viewBox="0 0 24 24"><path d="M2 1l18-1 1 14-17 1z" fill="#d3d6dc"/><path d="M3.500 2.500L18.500 1.500l1 11L5 13.500z" fill="#1d3fc4"/><path d="M11 2l7.500-.5 1 11z" fill="#5b83ec"/><path d="M8 15l6-.5 1 4-10 2z" fill="#a9aeb8"/><circle cx="18" cy="18.500" r="5" fill="#e9e9e9" stroke="#999"/><path d="M16 16.500l2 1.700-2 1.800M20.500 16.500l-2 1.700" fill="none" stroke="#2e9a35" stroke-width="1.300"/></svg></button>
  <button aria-label="Photo" class="grid w-11 place-items-center"><svg class="size-6" viewBox="0 0 24 24"><path fill="#77787a" d="M0 3h24v18H0z"/><path fill="#a3a4a6" d="M0 3h24v4l-8-1-6 2-10-1z"/><path fill="#4c4d4e" d="M0 10l8-1 16 5v7H0z"/><path d="M2 11l6 1 4 1.500M4 14l10 1M12 12l8 3" stroke="#c9cacb"/><path fill="#1d1d1d" d="M0 17l24-1v5H0z"/></svg></button>
  <span class="ml-0.5 -mb-px w-px bg-[#4a4a4a]"></span>
  <button aria-label="Greenshot camera" class="ml-0.5 grid w-11 place-items-center"><svg class="size-6" viewBox="0 0 24 24"><path fill="#c5c5c5" d="M0 0h24v24H0z"/><path fill="#168b8f" d="M3 10h18v12H3z"/><path d="M6 10V3" stroke="#168b8f" stroke-width="2"/><rect x="3" y="2" width="6" height="4" rx="1" fill="#3fc8cc" stroke="#0c6468"/><path d="M3 10h18" stroke="#7b3434"/><circle cx="13" cy="16" r="3.800" fill="#111"/><circle cx="13" cy="16" r="2.200" fill="#4fe0e4"/></svg></button>
  <button aria-label="More" class="grid w-11 place-items-center"><svg class="size-5" viewBox="0 0 20 20" fill="#fff"><circle cx="3.800" cy="10" r="1.700"/><circle cx="10" cy="10" r="1.700"/><circle cx="16.200" cy="10" r="1.700"/></svg></button>
  <span class="ml-0.5 -mb-px w-px bg-[#4a4a4a]"></span>
  <div class="ml-auto flex items-center pr-5">
    <button aria-label="Show hidden icons"><svg class="size-3" viewBox="0 0 12 12"><path d="M1 8.500l5-5 5 5" fill="none" stroke="#fff" stroke-width="1.600"/></svg></button>
    <span class="ml-5 text-[11px]">POR</span>
    <button aria-label="Network, sound and battery" class="ml-[18px] flex items-center gap-2">
      <svg class="size-4" viewBox="0 0 16 16" fill="none" stroke="#fff" stroke-width="1.400"><path d="M.8 6.500Q8-1 15.200 6.500M3 9Q8 3.800 13 9M5.300 11.300Q8 8.800 10.700 11.300"/><circle cx="8" cy="13" r="1" fill="#fff"/></svg>
      <svg class="size-4" viewBox="0 0 16 16" fill="none" stroke="#fff" stroke-width="1.200"><path d="M1 5.800h2.500L7.500 2v12l-4-3.800H1z"/><path d="M9.500 5.500q1.500 2.500 0 5"/><path d="M11.500 4q2.500 4 0 8M13.500 2.500q3.500 5.500 0 11" stroke="#777"/></svg>
      <svg class="size-4" viewBox="0 0 16 16" fill="none" stroke="#fff" stroke-width="1.300"><path d="M6.500 4h6.300q1.200 0 1.200 1.200v5.600q0 1.200-1.200 1.200H3Q1.800 12 1.800 10.800V9M15.200 6.500v3"/><path d="M6.500 6h5.500v4.200H3.800V9z" fill="#fff" stroke="none"/><path d="M4 0L.5 5.500H3L2 9l3.800-5.500H3.500z" fill="#fff" stroke="none"/></svg>
    </button>
    <div class="ml-4 text-right leading-4"><div>2:26 PM</div><div>3/11/2024</div></div>
    <button aria-label="Notifications" class="ml-2"><svg class="size-4" viewBox="0 0 16 16"><path d="M1 12l1.500-2V6.500Q2.500 2 7 2t4.500 4.500V10l1.500 2zM5 13h4q-.5 2-2 2t-2-2z" fill="#fff"/><path d="M5.500 5.500h3l-3 4h3" stroke="#202020" fill="none"/><path d="M10 .8h4l-4 4h4" stroke="#fff" fill="#202020"/></svg></button>
  </div>
</footer>
</body>
</html>
